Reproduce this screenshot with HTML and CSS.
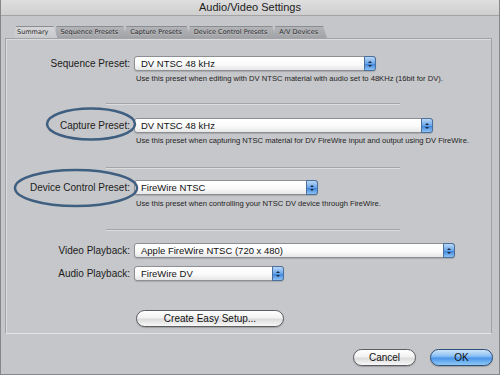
FILE: index.html
```html
<!DOCTYPE html>
<html>
<head>
<meta charset="utf-8">
<link rel="stylesheet" href="styles.css">
</head>
<body>
<div class="window">
  <div class="titlebar">Audio/Video Settings</div>
  <div class="tabs">
    <div class="tab active first">Summary</div>
    <div class="tab">Sequence Presets</div>
    <div class="tab">Capture Presets</div>
    <div class="tab">Device Control Presets</div>
    <div class="tab">A/V Devices</div>
  </div>
  <div class="panel">
    <div class="row r-seq">
      <span class="label">Sequence Preset:</span>
      <div class="popup w-seq"><span class="val">DV NTSC 48 kHz</span><span class="arrows"><i class="up"></i><i class="dn"></i></span></div>
    </div>
    <p class="desc d-seq">Use this preset when editing with DV NTSC material with audio set to 48KHz (16bit for DV).</p>
    <div class="sep s1"></div>
    <div class="row r-cap">
      <span class="label">Capture Preset:</span>
      <div class="popup w-cap"><span class="val">DV NTSC 48 kHz</span><span class="arrows"><i class="up"></i><i class="dn"></i></span></div>
    </div>
    <p class="desc d-cap">Use this preset when capturing NTSC material for DV FireWire input and output using DV FireWire.</p>
    <div class="sep s2"></div>
    <div class="row r-dev">
      <span class="label">Device Control Preset:</span>
      <div class="popup w-dev"><span class="val">FireWire NTSC</span><span class="arrows"><i class="up"></i><i class="dn"></i></span></div>
    </div>
    <p class="desc d-dev">Use this preset when controlling your NTSC DV device through FireWire.</p>
    <div class="sep s3"></div>
    <div class="row r-vid">
      <span class="label">Video Playback:</span>
      <div class="popup w-vid"><span class="val">Apple FireWire NTSC (720 x 480)</span><span class="arrows"><i class="up"></i><i class="dn"></i></span></div>
    </div>
    <div class="row r-aud">
      <span class="label">Audio Playback:</span>
      <div class="popup w-aud"><span class="val">FireWire DV</span><span class="arrows"><i class="up"></i><i class="dn"></i></span></div>
    </div>
    <div class="setup-row"><button class="pill setup">Create Easy Setup...</button></div>
  </div>
  <div class="footer">
    <button class="pill cancel">Cancel</button>
    <button class="pill ok">OK</button>
  </div>
  <svg class="annot" width="500" height="375" viewBox="0 0 500 375">
    <ellipse cx="91" cy="124" rx="44" ry="15.5" fill="none" stroke="#3f5f80" stroke-width="2.5"/>
    <ellipse cx="76" cy="188" rx="61" ry="18" fill="none" stroke="#3f5f80" stroke-width="2.5"/>
  </svg>
</div>
</body>
</html>
```
FILE: styles.css
```css
* { box-sizing: border-box; }
html, body { margin: 0; padding: 0; }
body {
  width: 500px; height: 375px; overflow: hidden;
  font-family: "Liberation Sans", Arial, sans-serif;
  color: #1c1c1c;
}
.window {
  position: relative;
  width: 500px; height: 375px;
  background: #c5c6c9;
  border: 1px solid #86878a;
  border-top: none;
  display: flex; flex-direction: column;
}
.titlebar {
  height: 16px;
  background: linear-gradient(#dedede, #cfcfd0);
  border-bottom: 1px solid #a3a3a5;
  text-align: center;
  font-size: 11px;
  line-height: 15px;
  color: #202020;
}
.tabs {
  display: flex;
  margin-top: 10px;
  padding-left: 13px;
  height: 12px;
  position: relative;
  z-index: 2;
}
.tab {
  height: 12px;
  font-family: "DejaVu Sans", sans-serif;
  font-size: 6.5px;
  line-height: 12px;
  padding: 0 9px 0 6px;
  color: #2a2a2a;
  background: linear-gradient(#b4b5b8, #a2a3a6);
  clip-path: polygon(0 100%, 2px 0, calc(100% - 4px) 0, 100% 100%);
  margin-right: -3px;
  position: relative;
  text-shadow: 0 1px 0 rgba(255,255,255,0.35);
  white-space: nowrap;
}
.tab::before {
  content: "";
  position: absolute; inset: 0;
  border-top: 1px solid #8c8d90;
}
.tab.first { padding-left: 3px; }
.tab.active {
  background: linear-gradient(#d6d6d8, #c8c9cc);
  z-index: 3;
}
.panel {
  margin: 0 7px 0 4px;
  height: 296px;
  border: 1px solid #a2a3a6;
  border-bottom-color: #e4e4e6;
  box-shadow: inset 1px 1px 0 #dcdcde;
  display: flex; flex-direction: column;
  background: #c6c7ca;
}
.row {
  display: grid;
  grid-template-columns: 128px auto;
  align-items: center;
  height: 15px;
}
.label {
  font-size: 10px;
  text-align: right;
  padding-right: 4px;
  color: #1c1c1c;
}
.popup {
  height: 15px;
  display: flex;
  align-items: center;
  background: linear-gradient(#ffffff 0%, #fbfbfb 55%, #e6e6e6 100%);
  border: 1px solid #8e8f92;
  border-radius: 3px;
  box-shadow: 0 1px 1px rgba(0,0,0,0.15);
  position: relative;
}
.val {
  flex: 1;
  font-size: 9.5px;
  padding-left: 6px;
  color: #111;
  white-space: nowrap;
}
.arrows {
  width: 12px; height: 15px;
  margin: -1px -1px -1px 0;
  border-radius: 0 3px 3px 0;
  border: 1px solid #4a6f9c;
  background: linear-gradient(#b9d7f7 0%, #6aa6ea 50%, #3f86dd 55%, #8fc2f4 100%);
  display: flex; flex-direction: column; align-items: center; justify-content: center;
  gap: 2px;
}
.arrows i {
  display: block; width: 0; height: 0;
  border-left: 2px solid transparent;
  border-right: 2px solid transparent;
}
.arrows .up { border-bottom: 2px solid #1b2a3e; }
.arrows .dn { border-top: 2px solid #1b2a3e; }
.w-seq { width: 242px; }
.w-cap { width: 299px; }
.w-dev { width: 184px; }
.w-vid { width: 321px; }
.w-aud { width: 150px; }
.desc {
  margin: 3px 0 0 130px;
  font-size: 7.6px;
  line-height: 10px;
  height: 10px;
  color: #1e1e1e;
  white-space: nowrap;
}
.sep {
  height: 2px;
  margin-left: 100px;
  width: 294px;
  border-top: 1px solid #a4a5a8;
  border-bottom: 1px solid #dcdddf;
}
.r-seq { margin-top: 17px; }
.s1 { margin-top: 19px; }
.r-cap { margin-top: 13px; }
.s2 { margin-top: 21px; }
.r-dev { margin-top: 11px; }
.d-dev { margin-top: 4px; }
.s3 { margin-top: 20px; }
.r-vid { margin-top: 12px; }
.r-aud { margin-top: 8px; }
.setup-row {
  margin-top: 27px;
  padding-left: 130px;
}
.pill {
  font-family: "Liberation Sans", Arial, sans-serif;
  font-size: 10px;
  height: 17px;
  padding: 0;
  border-radius: 9px;
  border: 1px solid #5c5d60;
  color: #111;
  background: linear-gradient(#ffffff 0%, #f2f2f2 45%, #dcdcdc 55%, #f8f8f8 100%);
  box-shadow: 0 1px 1px rgba(0,0,0,0.2);
}
.setup { width: 148px; }
.footer {
  display: flex;
  justify-content: flex-end;
  gap: 14px;
  padding: 15px 6px 0 0;
}
.cancel { width: 63px; }
.ok {
  width: 63px;
  border-color: #2c4d78;
  background: linear-gradient(#cfe6fb 0%, #8cc0f3 40%, #4c97e9 55%, #8ec8f6 100%);
}
.annot {
  position: absolute;
  left: -1px; top: 0;
  pointer-events: none;
  z-index: 5;
}
```
